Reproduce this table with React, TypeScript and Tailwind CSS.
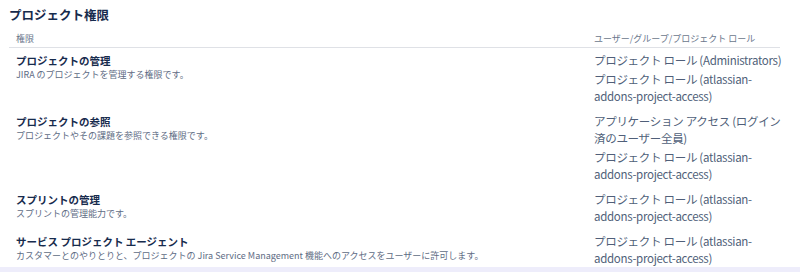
type Perm = {
  name: string;
  desc: string;
  grants: string[][];
};

const perms: Perm[] = [
  {
    name: "プロジェクトの管理",
    desc: "JIRA のプロジェクトを管理する権限です。",
    grants: [
      ["プロジェクト ロール (Administrators)"],
      ["プロジェクト ロール (atlassian-", "addons-project-access)"],
    ],
  },
  {
    name: "プロジェクトの参照",
    desc: "プロジェクトやその課題を参照できる権限です。",
    grants: [
      ["アプリケーション アクセス (ログイン", "済のユーザー全員)"],
      ["プロジェクト ロール (atlassian-", "addons-project-access)"],
    ],
  },
  {
    name: "スプリントの管理",
    desc: "スプリントの管理能力です。",
    grants: [["プロジェクト ロール (atlassian-", "addons-project-access)"]],
  },
  {
    name: "サービス プロジェクト エージェント",
    desc: "カスタマーとのやりとりと、プロジェクトの Jira Service Management 機能へのアクセスをユーザーに許可します。",
    grants: [["プロジェクト ロール (atlassian-", "addons-project-access)"]],
  },
];

export default function App() {
  return (
    <div className="w-[800px] h-[272px] overflow-hidden bg-white font-['Noto_Sans_CJK_JP',sans-serif] flex flex-col">
      <div className="pt-[5px] pl-[9px] w-[780px]">
        <h2 className="text-[12.5px] leading-[20px] font-bold text-[#172b4d]">プロジェクト権限</h2>

        {/* header */}
        <div className="grid grid-cols-[585px_1fr] pt-[7px] pb-[1px] border-b border-[#dfe1e6] text-[9px] leading-[14px] text-[#6b778c]">
          <div className="pl-[7px]">権限</div>
          <div>ユーザー/グループ/プロジェクト ロール</div>
        </div>

        {perms.map((p, i) => (
          <div
            key={p.name}
            className={
              "grid grid-cols-[585px_1fr] " + (i === perms.length - 1 ? "pb-0" : "pb-[4px]")
            }
          >
            <div className="pl-[7px] pt-[6px]">
              <div className="text-[10.5px] leading-[14px] font-bold text-[#172b4d] whitespace-nowrap">
                {p.name}
              </div>
              <div className="text-[9px] leading-[14px] text-[#5e6c84] whitespace-nowrap">{p.desc}</div>
            </div>
            <div className="pt-[4px] flex flex-col gap-[2px] text-[11.5px] leading-[17px] tracking-[-0.3px] text-[#505f79]">
              {p.grants.map((g, j) => (
                <div key={j} className="whitespace-nowrap">
                  {g.map((line, k) => (
                    <div key={k}>{line}</div>
                  ))}
                </div>
              ))}
            </div>
          </div>
        ))}
      </div>
      <div className="h-[8px] bg-[#eeedfb] shrink-0" />
    </div>
  );
}
